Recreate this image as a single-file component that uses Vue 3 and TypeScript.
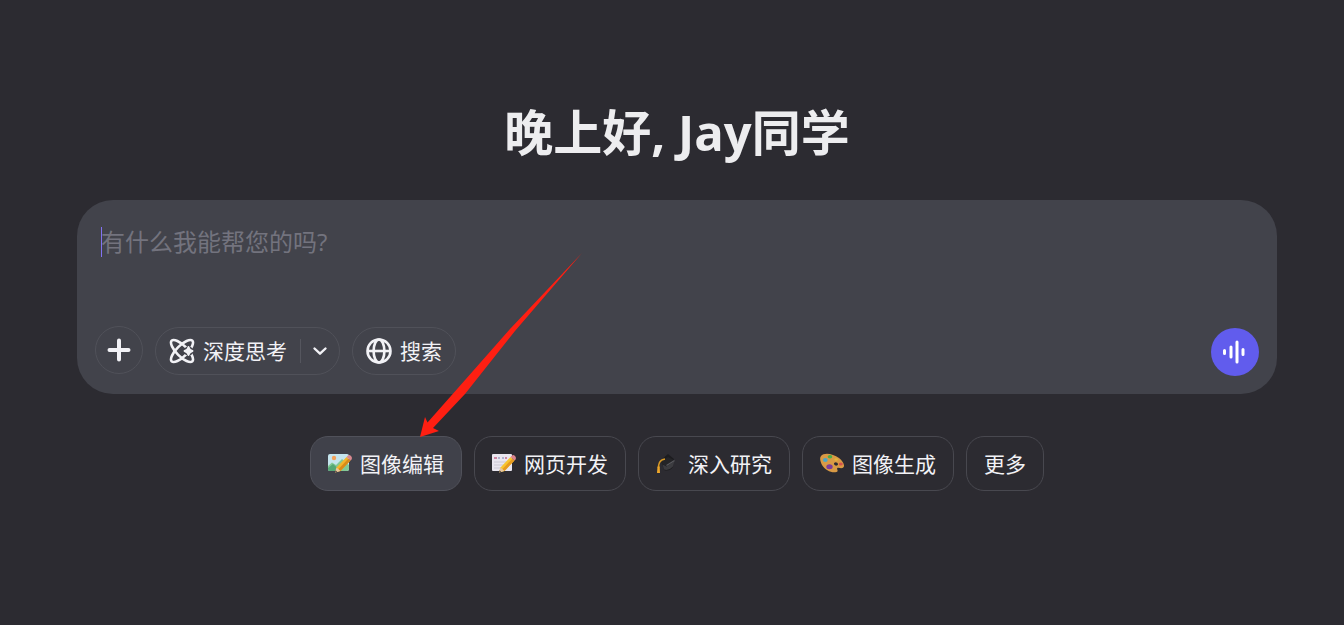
<script setup lang="ts">
import { ref } from 'vue'

interface Suggestion {
  id: string
  label: string
}

const message = ref('')
const active = ref('edit')
const suggestions: Suggestion[] = [
  { id: 'edit', label: '图像编辑' },
  { id: 'web', label: '网页开发' },
  { id: 'research', label: '深入研究' },
  { id: 'paint', label: '图像生成' },
  { id: 'more', label: '更多' },
]
</script>

<template>
  <main class="home">
    <h1 class="greeting">晚上好, Jay同学</h1>

    <form class="composer" @submit.prevent>
      <div class="field" :class="{ empty: !message }">
        <textarea v-model="message" class="prompt" aria-label="消息" placeholder="有什么我能帮您的吗?"></textarea>
      </div>
      <div class="tools">
        <button type="button" class="add" aria-label="添加">
          <svg viewBox="0 0 24 24" width="24" height="24" aria-hidden="true">
            <path d="M12 2.500v19M2.500 12h19" fill="none" stroke="currentColor" stroke-width="4" stroke-linecap="round" />
          </svg>
        </button>
        <div class="pill">
          <button type="button" class="pill-main">
            <svg viewBox="0 0 26 26" width="26" height="26" aria-hidden="true">
              <g fill="none" stroke="currentColor" stroke-width="2.600">
                <ellipse cx="13" cy="13" rx="14.600" ry="5.400" transform="rotate(45 13 13)" />
                <ellipse cx="13" cy="13" rx="14.600" ry="5.400" transform="rotate(-45 13 13)" />
              </g>
              <circle cx="19.500" cy="13" r="4.600" fill="#42434b" />
              <path d="M19.500 9C20.100 11.600 20.900 12.400 23.500 13C20.900 13.600 20.100 14.400 19.500 17C18.900 14.400 18.100 13.600 15.500 13C18.100 12.400 18.900 11.600 19.500 9Z" fill="currentColor" stroke="currentColor" stroke-width="1.800" stroke-linejoin="round" />
            </svg>
            <span>深度思考</span>
          </button>
          <button type="button" class="pill-menu" aria-label="思考选项">
            <svg viewBox="0 0 16 16" width="16" height="16" aria-hidden="true">
              <path d="M2.500 5.500L8 10.700L13.500 5.500" fill="none" stroke="currentColor" stroke-width="2.400" stroke-linecap="round" stroke-linejoin="round" />
            </svg>
          </button>
        </div>
        <div class="pill">
          <button type="button" class="pill-search">
            <svg viewBox="0 0 26 26" width="26" height="26" aria-hidden="true">
              <g fill="none" stroke="currentColor" stroke-width="2.600">
                <circle cx="13" cy="13" r="11.500" />
                <ellipse cx="13" cy="13" rx="5.400" ry="11.500" />
                <path d="M1.500 13h23" />
              </g>
            </svg>
            <span>搜索</span>
          </button>
        </div>
        <button type="button" class="voice" aria-label="语音通话">
          <svg viewBox="0 0 24 24" width="24" height="24" aria-hidden="true">
            <path d="M1.500 10.500v3M8 7v10M14 2v20M20 9.500v5" fill="none" stroke="currentColor" stroke-width="3" stroke-linecap="round" />
          </svg>
        </button>
      </div>
    </form>

    <ul class="suggestions">
      <li v-for="item in suggestions" :key="item.id" class="suggestion">
        <button type="button" class="chip" :class="{ active: item.id === active }" @click="active = item.id">
          <svg v-if="item.id === 'edit'" viewBox="0 0 24 24" width="24" height="24" aria-hidden="true">
            <rect x="0" y="2" width="21" height="17" rx="2" fill="#c5e5ee" />
            <circle cx="6" cy="6" r="2.200" fill="#f2a25c" />
            <path d="M0 14L4 10.500L8 13L14 7L21 13V17Q21 19 19 19H2Q0 19 0 17Z" fill="#83c995" />
            <path d="M0 16L5 12L13 19H2Q0 19 0 17Z" fill="#54a875" />
            <path d="M7 20.500L8.500 15.500L18.500 5L22.500 8.500L12.500 19Z" fill="#f3b52c" />
            <path d="M10.300 17.200L20.300 6.700L22.500 8.500L12.500 19Z" fill="#d98b19" />
            <path d="M18.500 5L20 3.400Q21.500 2.500 23 4Q24.500 5.500 23.600 7.200L22.500 8.500Z" fill="#d98990" />
            <path d="M7 20.500L8.500 15.500L12.500 19Z" fill="#e8c79f" />
            <path d="M7 20.500L7.600 18.300L9.200 19.700Z" fill="#4b4142" />
          </svg>
          <svg v-else-if="item.id === 'web'" viewBox="0 0 24 24" width="24" height="24" aria-hidden="true">
            <rect x="0" y="2" width="20" height="17" rx="1" fill="#e9e6ef" />
            <path d="M2 10h15M2 13h13M2 16h11" stroke="#cbc8d4" stroke-width="1" />
            <path d="M2 6h3M13 6h2" stroke="#c26589" stroke-width="1.500" />
            <path d="M7 5v2M11 5v2" stroke="#7480af" stroke-width="1" />
            <path d="M7 20.500L8.500 15.500L18.500 5L22.500 8.500L12.500 19Z" fill="#f8c52f" />
            <path d="M10.300 17.200L20.300 6.700L22.500 8.500L12.500 19Z" fill="#e79b20" />
            <path d="M18.500 5L20 3.400Q21.500 2.500 23 4Q24.500 5.500 23.600 7.200L22.500 8.500Z" fill="#dc858e" />
            <path d="M7 20.500L8.500 15.500L12.500 19Z" fill="#e8c79f" />
            <path d="M7 20.500L7.600 18.300L9.200 19.700Z" fill="#4b4142" />
          </svg>
          <svg v-else-if="item.id === 'research'" viewBox="0 0 24 24" width="24" height="24" aria-hidden="true">
            <path d="M5 8L12 2L18 7L17 15Q13 20 8 18Z" fill="#1c1c1f" />
            <path d="M4 10L12 5L19 8.500L10 14.500Z" fill="#242427" />
            <path d="M6.500 12.500L10.500 14.500L18.500 9L17 14.500Q13 19 8 17.500Z" fill="#3c3c40" />
            <path d="M10.500 13.500L18.500 8.500" stroke="#5a5a5f" stroke-width="1.200" />
            <path d="M9 7Q5 7.500 3.500 10.500Q2.500 12.500 2.500 16" fill="none" stroke="#d89925" stroke-width="1.600" />
            <path d="M1.500 14.500h2.200l.3 6.500H1Z" fill="#eda62a" />
          </svg>
          <svg v-else-if="item.id === 'paint'" viewBox="0 0 24 24" width="24" height="24" aria-hidden="true">
            <path fill-rule="evenodd" d="M1 4C4 0 13 1.500 19 6C24 10 25.500 15 22.500 16C20.500 16.600 18 15 17.200 16.200C16.500 17.500 19 19 16.500 20C12 21.500 5 18 2 13C0 9-.5 6 1 4ZM14.200 12.600Q15.500 14.500 17.500 13.300Q18.600 12 17.200 10.700Q15.500 9.800 14.400 10.800Q13.700 11.500 14.200 12.600Z" fill="#d99a45" />
            <ellipse cx="10" cy="4.700" rx="2.300" ry="1.700" fill="#47ad4c" />
            <ellipse cx="5.300" cy="8" rx="2.400" ry="2" fill="#4ba7c6" />
            <ellipse cx="9.500" cy="14.700" rx="3.200" ry="2.500" fill="#7c3d99" />
            <ellipse cx="16.200" cy="7.500" rx="1.800" ry="1.300" fill="#e3b63a" />
            <ellipse cx="20.800" cy="12" rx="2" ry="1.600" fill="#d6514d" />
          </svg>
          <span>{{ item.label }}</span>
        </button>
        <svg v-if="item.id === 'edit'" class="pointer" viewBox="0 0 162 184" width="162" height="184" aria-hidden="true">
          <path d="M0 184L5 164L7.500 169.500L38 135L90 76L162 0L95 78L45 141L13 175L19 178Z" fill="#fe1f12" />
        </svg>
      </li>
    </ul>
  </main>
</template>

<style>
body {
  background: #2c2b31;
}
</style>

<style scoped>
* {
  box-sizing: border-box;
}

.home {
  min-height: 100vh;
  padding: 96px 67px 48px 77px;
  background: #2c2b31;
  color: #f2f2f6;
  font-family: "Open Sans", "Noto Sans CJK SC", sans-serif;
  font-size: 21px;
}

button,
textarea {
  margin: 0;
  padding: 0;
  border: 0;
  background: transparent;
  color: inherit;
  font: inherit;
}

button {
  display: flex;
  align-items: center;
  justify-content: center;
  cursor: pointer;
  line-height: 32px;
  white-space: nowrap;
}

svg {
  display: block;
  flex: none;
}

.greeting {
  margin: 0;
  color: #ededef;
  font-size: 49px;
  font-weight: 700;
  line-height: 72px;
  text-align: center;
}

.composer {
  margin-top: 32px;
  padding: 24px 18px 18px;
  border-radius: 36px;
  background: #42434b;
}

.field {
  position: relative;
  height: 102px;
  padding: 0 6px;
}

.field.empty::after {
  content: "";
  position: absolute;
  top: 3px;
  left: 6px;
  width: 1px;
  height: 30px;
  background: #8272f2;
  pointer-events: none;
}

.prompt {
  display: block;
  width: 100%;
  height: 100%;
  outline: 0;
  resize: none;
  caret-color: #8272f2;
  font-size: 24px;
  line-height: 36px;
}

.prompt::placeholder {
  color: #73737e;
  opacity: 1;
}

.tools {
  display: flex;
  align-items: center;
  gap: 12px;
  height: 50px;
}

.add {
  align-self: flex-start;
  width: 48px;
  height: 48px;
  border: 1px solid #505159;
  border-radius: 50%;
}

.pill {
  display: flex;
  height: 48px;
  border: 1px solid #505159;
  border-radius: 24px;
}

.pill-main,
.pill-search {
  gap: 8px;
  padding: 0 13px;
}

.pill-menu {
  position: relative;
  width: 39px;
}

.pill-menu::before {
  content: "";
  position: absolute;
  top: 11px;
  left: 0;
  width: 1px;
  height: 24px;
  background: #55565e;
}

.voice {
  align-self: flex-end;
  width: 48px;
  height: 48px;
  margin-left: auto;
  border-radius: 50%;
  background: #615ced;
  color: #fff;
}

.suggestions {
  display: flex;
  flex-wrap: wrap;
  justify-content: center;
  gap: 12px;
  margin: 42px 0 0;
  padding: 0;
  list-style: none;
}

.suggestion {
  position: relative;
}

.chip {
  gap: 8px;
  height: 55px;
  padding: 0 17px;
  border: 1px solid #48484f;
  border-radius: 18px;
}

.chip.active {
  border-color: #50515a;
  background: #40414a;
}

.pointer {
  position: absolute;
  bottom: 54px;
  left: 110px;
  pointer-events: none;
}
</style>
